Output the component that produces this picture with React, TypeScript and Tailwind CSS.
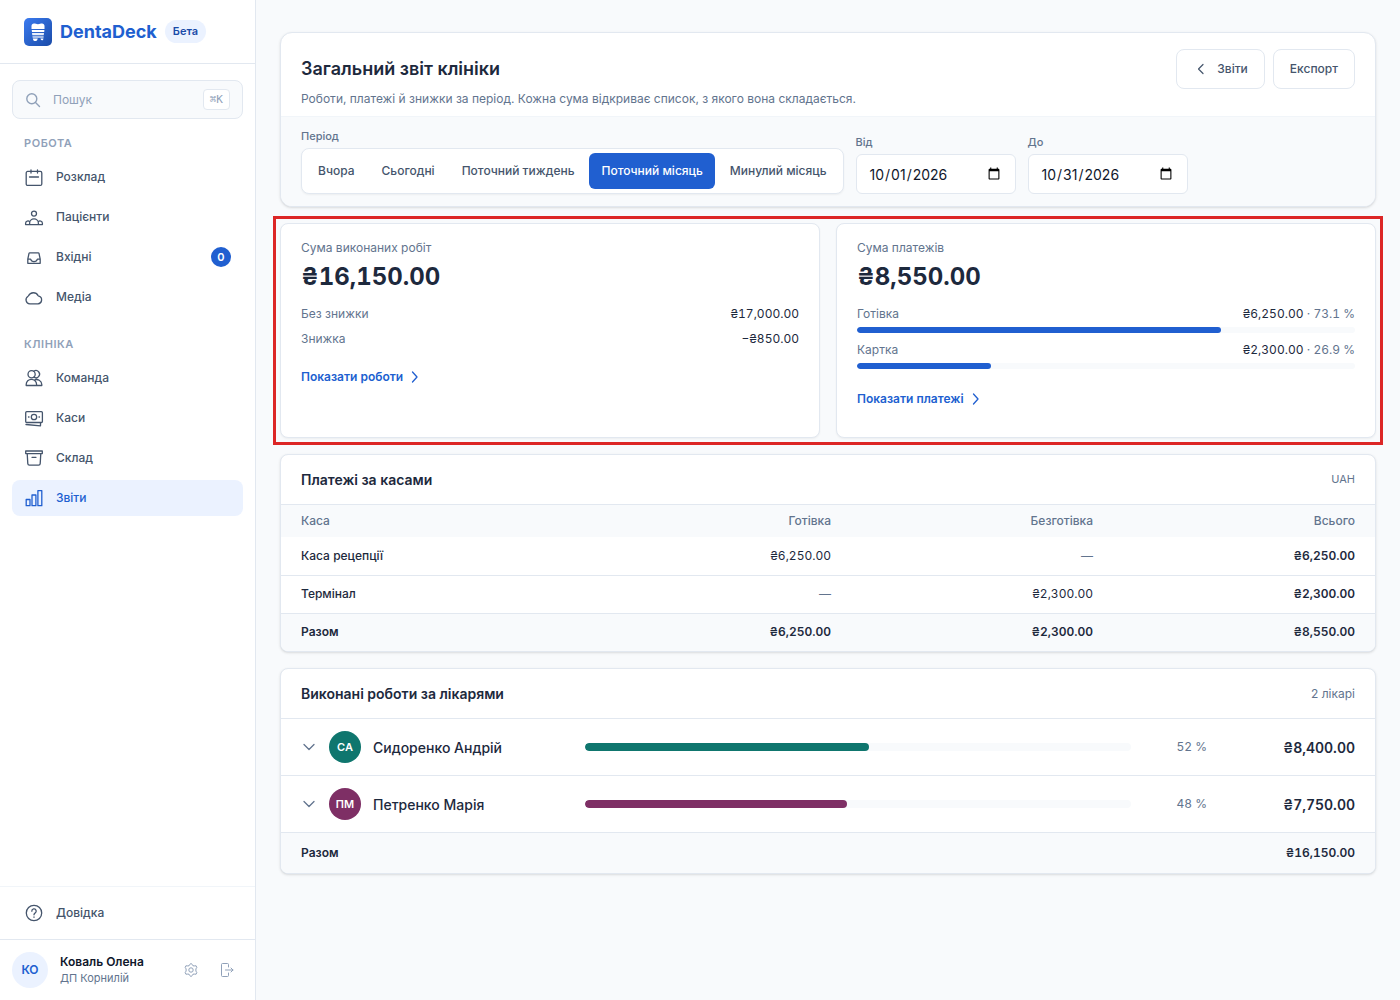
import { useState } from 'react';
import type { ReactNode } from 'react';

type IconName =
  | 'calendar'
  | 'patients'
  | 'inbox'
  | 'cloud'
  | 'team'
  | 'cash'
  | 'box'
  | 'bars'
  | 'help';

interface NavItem {
  label: string;
  icon: IconName;
  badge?: number;
}

const workItems: NavItem[] = [
  { label: 'Розклад', icon: 'calendar' },
  { label: 'Пацієнти', icon: 'patients' },
  { label: 'Вхідні', icon: 'inbox', badge: 0 },
  { label: 'Медіа', icon: 'cloud' },
];

const clinicItems: NavItem[] = [
  { label: 'Команда', icon: 'team' },
  { label: 'Каси', icon: 'cash' },
  { label: 'Склад', icon: 'box' },
  { label: 'Звіти', icon: 'bars' },
];

const periods = ['Вчора', 'Сьогодні', 'Поточний тиждень', 'Поточний місяць', 'Минулий місяць'];

const methods = [
  { name: 'Готівка', amount: '₴6,250.00', share: 73.1 },
  { name: 'Картка', amount: '₴2,300.00', share: 26.9 },
];

const registers = [
  { name: 'Каса рецепції', cash: '₴6,250.00', card: '—', total: '₴6,250.00' },
  { name: 'Термінал', cash: '—', card: '₴2,300.00', total: '₴2,300.00' },
];

const doctors = [
  { initials: 'СА', name: 'Сидоренко Андрій', share: 52, amount: '₴8,400.00', color: 'bg-[#0f766e]' },
  { initials: 'ПМ', name: 'Петренко Марія', share: 48, amount: '₴7,750.00', color: 'bg-[#7e2f65]' },
];

const iconShapes: Record<IconName, ReactNode> = {
  calendar: (
    <>
      <rect x="2.2" y="4.4" width="15.6" height="14" rx="1.5" />
      <path d="M7 3v3M13.5 3v3M5.5 10h9" />
    </>
  ),
  patients: (
    <>
      <circle cx="10" cy="6.6" r="2.5" />
      <path d="M1.600 17.600v-1.300a2.300 2.300 0 0 1 4.200-1.300M18.400 17.600v-1.300a2.300 2.300 0 0 0-4.200-1.300M5.600 17.600v-1.400a4.400 4.400 0 0 1 8.800 0v1.400M1.600 17.600h16.800" />
    </>
  ),
  inbox: (
    <path d="M5.800 5.800h8.400a.8.8 0 0 1 .8.600l1.200 5.800v4.100H3.800v-4.100L5 6.400a.8.8 0 0 1 .8-.6zM3.800 12.200h2.800c.4 1.500 1.600 2.500 3.400 2.500s3-1 3.400-2.500h2.800" />
  ),
  cloud: (
    <path d="M5.700 16.800h8.300a3.900 3.900 0 0 0 .9-7.600 1.500 1.500 0 0 1-.8-.6 5.400 5.400 0 0 0-9.600.2 1.500 1.500 0 0 1-.7.7 4 4 0 0 0 1.900 7.300z" />
  ),
  team: (
    <>
      <circle cx="7.600" cy="6.200" r="3.600" />
      <path d="M9.800 3.300a3.600 3.600 0 1 1 0 5.800M2.200 17.500v-1a5.200 5.200 0 0 1 10.400 0v1zM10.300 12a5.300 5.300 0 0 1 7.500 4.500v1h-5.200" />
    </>
  ),
  cash: (
    <>
      <rect x="1.700" y="3.700" width="16.700" height="10.800" rx="1" />
      <circle cx="10" cy="9" r="2.700" />
      <path d="M4.500 9h.5M15 9h.5M2 16.500l14.500 1.300v-3" />
    </>
  ),
  box: (
    <path d="M1.700 3h16.600v2.600H1.700zM3.200 5.600l.6 10a1.600 1.600 0 0 0 1.600 1.500h9.200a1.600 1.600 0 0 0 1.600-1.500l.6-10M8 9.300h4" />
  ),
  bars: (
    <path d="M2.200 11.500h3.800v6.200H2.200zM8 7h3.900v10.700H8zM13.900 2.600h3.900v15.100h-3.900z" />
  ),
  help: (
    <>
      <circle cx="10" cy="10" r="7.700" />
      <path d="M7.800 8.200a2.200 2.200 0 1 1 3.200 1.900c-.7.4-1 .8-1 1.700M10 14v.3" />
    </>
  ),
};

function Icon({ name }: { name: IconName }) {
  return (
    <svg
      viewBox="0 0 20 20"
      fill="none"
      stroke="currentColor"
      strokeWidth="1.3"
      strokeLinecap="round"
      strokeLinejoin="round"
      className="size-5 shrink-0"
      aria-hidden="true"
    >
      {iconShapes[name]}
    </svg>
  );
}

function Chevron({ d, className }: { d: string; className: string }) {
  return (
    <svg viewBox="0 0 16 16" fill="none" stroke="currentColor" strokeLinecap="round" strokeLinejoin="round" className={className} aria-hidden="true">
      <path d={d} />
    </svg>
  );
}

function Logo() {
  return (
    <svg viewBox="0 0 28 28" className="size-7" aria-hidden="true">
      <defs>
        <linearGradient id="logo-bg" x1="0" y1="0" x2="1" y2="1">
          <stop offset="0" stopColor="#3b7bf0" />
          <stop offset="1" stopColor="#1a4ba8" />
        </linearGradient>
      </defs>
      <rect width="28" height="28" rx="5" fill="url(#logo-bg)" />
      <path d="M7.500 11V8c0-1.600 1-2.500 2.500-2.500 1.400 0 2.300.7 4 .7s2.600-.7 4-.7c1.500 0 2.500.9 2.500 2.500v3z" fill="#fff" />
      <path d="M7.700 12h12.700l-.2 2H8z" fill="#fff" />
      <path d="M8 15h12l-.3 2.300H8.300z" fill="#fff" opacity=".9" />
      <path d="M8.400 18.300h11.300l-.2 1.500H8.700z" fill="#fff" opacity=".8" />
      <path d="M8.800 20.500h5l-.6 1.500c-.3.700-1 1-1.900 1-1.200 0-1.900-.5-2.200-1.500zM16.500 20.500h3l-.5 1.500c-.8.700-2 .3-2.200-.5z" fill="#fff" />
    </svg>
  );
}

function NavList({ items, active, onSelect }: { items: NavItem[]; active: string; onSelect: (label: string) => void }) {
  return (
    <ul className="space-y-1">
      {items.map((item) => (
        <li key={item.label}>
          <a
            href="#"
            onClick={() => onSelect(item.label)}
            className={`flex h-9 items-center gap-3 rounded-lg px-3 text-[12px] font-medium ${
              active === item.label ? 'bg-[#ebf2ff] text-[#205fd0]' : 'text-slate-600'
            }`}
          >
            <Icon name={item.icon} />
            <span className="flex-1">{item.label}</span>
            {item.badge !== undefined && (
              <span className="flex size-5 items-center justify-center rounded-full bg-[#205fd0] text-[11px] font-semibold text-white">
                {item.badge}
              </span>
            )}
          </a>
        </li>
      ))}
    </ul>
  );
}

function Sidebar() {
  const [active, setActive] = useState('Звіти');

  return (
    <aside className="sticky top-0 flex h-screen w-64 shrink-0 flex-col border-r border-slate-200 bg-white">
      <div className="flex h-16 shrink-0 items-center gap-2 border-b border-slate-200 px-6">
        <Logo />
        <span className="text-[18px] font-bold text-[#205fd0]">DentaDeck</span>
        <span className="rounded-full bg-[#ebf2ff] px-2 py-1 text-[11px] leading-[15px] font-semibold text-[#1a4ba8]">Бета</span>
      </div>

      <nav className="flex-1 overflow-y-auto px-3 pt-4">
        <div className="flex h-[39px] items-center gap-3 rounded-lg border border-slate-200 bg-slate-50 px-3 text-slate-400">
          <svg viewBox="0 0 16 16" fill="none" stroke="currentColor" strokeWidth="1.400" strokeLinecap="round" className="size-4 shrink-0" aria-hidden="true">
            <circle cx="6.800" cy="6.800" r="5" />
            <path d="M10.500 10.500l4 4" />
          </svg>
          <input
            type="search"
            aria-label="Пошук"
            placeholder="Пошук"
            className="min-w-0 flex-1 bg-transparent text-[12px] outline-none placeholder:text-slate-400"
          />
          <kbd className="rounded border border-slate-200 bg-white px-1.5 py-0.5 font-['DejaVu_Sans_Mono',monospace] text-[11px] leading-[15px]">⌘K</kbd>
        </div>

        <h2 className="mt-4 mb-2 px-3 text-[11px] leading-4 font-semibold tracking-wider text-slate-400">РОБОТА</h2>
        <NavList items={workItems} active={active} onSelect={setActive} />
        <h2 className="mt-[21px] mb-2 px-3 text-[11px] leading-4 font-semibold tracking-wider text-slate-400">КЛІНІКА</h2>
        <NavList items={clinicItems} active={active} onSelect={setActive} />
      </nav>

      <div className="border-t border-slate-100 px-3 py-2">
        <NavList items={[{ label: 'Довідка', icon: 'help' }]} active={active} onSelect={setActive} />
      </div>

      <div className="flex items-center gap-3 border-t border-slate-200 p-3">
        <span className="flex size-9 items-center justify-center rounded-full bg-[#ebf2ff] text-[12px] font-semibold text-[#205fd0]">КО</span>
        <div className="min-w-0 flex-1">
          <p className="text-[12px] leading-4 font-semibold text-slate-900">Коваль Олена</p>
          <p className="text-[11px] leading-4 text-slate-500">ДП Корнилій</p>
        </div>
        <div className="flex gap-1 text-slate-400">
          <button type="button" aria-label="Налаштування" className="flex size-8 items-center justify-center">
            <svg viewBox="0 0 16 16" fill="none" stroke="currentColor" strokeLinejoin="round" className="size-4" aria-hidden="true">
              <circle cx="8" cy="8" r="2.200" />
              <path d="M6.600 2.600 8 1.500l1.400 1.100.6 1.200 1.300.1 1.800-.1.700 1.700-.9 1.400v2.200l.9 1.400-.7 1.700-1.800-.1-1.300.1-.6 1.200L8 14.500l-1.400-1.100-.6-1.200-1.300-.1-1.800.1-.7-1.700.9-1.400V6.900l-.9-1.400.7-1.700 1.800.1L6 3.800z" />
            </svg>
          </button>
          <button type="button" aria-label="Вийти" className="flex size-8 items-center justify-center">
            <svg viewBox="0 0 16 16" fill="none" stroke="currentColor" strokeLinecap="round" strokeLinejoin="round" className="size-4" aria-hidden="true">
              <path d="M9.500 5V2.500a1 1 0 0 0-1-1h-5a1 1 0 0 0-1 1v11a1 1 0 0 0 1 1h5a1 1 0 0 0 1-1V11M6.500 8h7.500M12 6l2 2-2 2" />
            </svg>
          </button>
        </div>
      </div>
    </aside>
  );
}

function DateField({ id, label, value }: { id: string; label: string; value: string }) {
  return (
    <div>
      <label htmlFor={id} className="mb-1 block text-[11px] leading-[15px] font-medium text-slate-500">{label}</label>
      <input
        id={id}
        type="date"
        defaultValue={value}
        className="block h-10 w-40 rounded-md border border-slate-200 bg-white px-3 text-[14px] text-slate-900"
      />
    </div>
  );
}

function ReportHeader() {
  const [period, setPeriod] = useState('Поточний місяць');

  return (
    <section className="overflow-hidden rounded-xl border border-slate-200 bg-white shadow-sm">
      <div className="flex items-start justify-between px-5 pt-4 pb-2">
        <div>
          <h1 className="text-[18px] leading-10 font-semibold text-slate-800">Загальний звіт клініки</h1>
          <p className="text-[12px] leading-[19px] text-slate-500">
            Роботи, платежі й знижки за період. Кожна сума відкриває список, з якого вона складається.
          </p>
        </div>
        <div className="flex gap-2 text-[12px] font-medium text-slate-600">
          <a href="#" className="flex h-10 items-center gap-2 rounded-lg border border-slate-200 px-4">
            <Chevron d="M10 3.500 5.500 8l4.500 4.500" className="size-4 stroke-[1.2]" />
            Звіти
          </a>
          <button type="button" className="h-10 rounded-lg border border-slate-200 px-4">Експорт</button>
        </div>
      </div>

      <div className="flex flex-wrap items-end gap-3 border-t border-slate-100 bg-slate-50 px-5 py-3">
        <div>
          <p id="period-label" className="mb-1 text-[11px] leading-[15px] font-medium text-slate-500">Період</p>
          <div role="group" aria-labelledby="period-label" className="flex gap-[3px] rounded-lg border border-slate-200 bg-white p-1 shadow-xs">
            {periods.map((name) => (
              <button
                key={name}
                type="button"
                onClick={() => setPeriod(name)}
                className={`h-9 rounded-md px-3 text-[12px] font-medium ${
                  period === name ? 'bg-[#205fd0] text-white' : 'text-slate-600'
                }`}
              >
                {name}
              </button>
            ))}
          </div>
        </div>
        <DateField id="date-from" label="Від" value="2026-10-01" />
        <DateField id="date-to" label="До" value="2026-10-31" />
      </div>
    </section>
  );
}

function ShowLink({ children }: { children: ReactNode }) {
  return (
    <a href="#" className="inline-flex items-center gap-1 text-[12px] leading-4 font-semibold text-[#205fd0]">
      {children}
      <Chevron d="M5.500 3l4.500 5-4.500 5" className="size-4 stroke-[1.3]" />
    </a>
  );
}

function Summary() {
  return (
    <section className="grid grid-cols-2 gap-4 outline-3 outline-offset-4 outline-[#dc2626]">
      <article className="rounded-lg border border-slate-200 bg-white px-5 py-4 shadow-xs">
        <h2 className="text-[12px] leading-4 text-slate-500">Сума виконаних робіт</h2>
        <p className="mt-[5px] text-[24px] leading-8 font-bold text-slate-800 tabular-nums">₴16,150.00</p>
        <dl className="mt-3 mb-4 space-y-2 text-[12px] leading-[17px]">
          <div className="flex justify-between">
            <dt className="text-slate-500">Без знижки</dt>
            <dd className="text-slate-800 tabular-nums">₴17,000.00</dd>
          </div>
          <div className="flex justify-between">
            <dt className="text-slate-500">Знижка</dt>
            <dd className="text-slate-800 tabular-nums">−₴850.00</dd>
          </div>
        </dl>
        <ShowLink>Показати роботи</ShowLink>
      </article>

      <article className="rounded-lg border border-slate-200 bg-white px-5 pt-4 pb-7 shadow-xs">
        <h2 className="text-[12px] leading-4 text-slate-500">Сума платежів</h2>
        <p className="mt-[5px] text-[24px] leading-8 font-bold text-slate-800 tabular-nums">₴8,550.00</p>
        <ul className="mt-3 mb-4 space-y-2 text-[12px] leading-[18px]">
          {methods.map((method) => (
            <li key={method.name}>
              <div className="flex justify-between">
                <span className="text-slate-500">{method.name}</span>
                <span className="text-slate-800 tabular-nums">
                  {method.amount} <span className="text-slate-500">· {method.share} %</span>
                </span>
              </div>
              <div className="mt-1 h-1.5 overflow-hidden rounded-full bg-slate-50">
                <div className="h-full rounded-full bg-[#205fd0]" style={{ width: `${method.share}%` }} />
              </div>
            </li>
          ))}
        </ul>
        <ShowLink>Показати платежі</ShowLink>
      </article>
    </section>
  );
}

function Registers() {
  return (
    <section className="overflow-hidden rounded-lg border border-slate-200 bg-white shadow-sm">
      <div className="flex h-[50px] items-center justify-between border-b border-slate-200 px-5">
        <h2 className="text-[14px] font-semibold text-slate-800">Платежі за касами</h2>
        <span className="text-[11px] text-slate-500">UAH</span>
      </div>
      <table className="w-full table-fixed text-right text-[12px] text-slate-800 tabular-nums">
        <thead>
          <tr className="h-8 bg-slate-50 text-slate-500">
            <th className="px-5 text-left font-medium">Каса</th>
            <th className="w-[262px] px-5 font-medium">Готівка</th>
            <th className="w-[262px] px-5 font-medium">Безготівка</th>
            <th className="w-[262px] px-5 font-medium">Всього</th>
          </tr>
        </thead>
        <tbody>
          {registers.map((row) => (
            <tr key={row.name} className="h-[38px] border-b border-slate-200">
              <td className="px-5 text-left font-medium">{row.name}</td>
              <td className={row.cash === '—' ? 'px-5 text-slate-500' : 'px-5'}>{row.cash}</td>
              <td className={row.card === '—' ? 'px-5 text-slate-500' : 'px-5'}>{row.card}</td>
              <td className="px-5 font-semibold">{row.total}</td>
            </tr>
          ))}
        </tbody>
        <tfoot>
          <tr className="h-[38px] bg-slate-50 font-semibold">
            <td className="px-5 text-left">Разом</td>
            <td className="px-5">₴6,250.00</td>
            <td className="px-5">₴2,300.00</td>
            <td className="px-5">₴8,550.00</td>
          </tr>
        </tfoot>
      </table>
    </section>
  );
}

function Doctors() {
  return (
    <section className="overflow-hidden rounded-lg border border-slate-200 bg-white shadow-sm">
      <div className="flex h-[50px] items-center justify-between border-b border-slate-200 px-5">
        <h2 className="text-[14px] font-semibold text-slate-800">Виконані роботи за лікарями</h2>
        <span className="text-[12px] text-slate-500">2 лікарі</span>
      </div>
      {doctors.map((doctor) => (
        <button
          key={doctor.name}
          type="button"
          className="grid h-[57px] w-full grid-cols-[16px_32px_200px_1fr_64px_136px] items-center gap-3 border-b border-slate-200 px-5 text-left"
        >
          <Chevron d="M3 5.500l5 5 5-5" className="size-4 stroke-[1.3] text-slate-500" />
          <span className={`flex size-8 items-center justify-center rounded-full text-[11px] font-semibold text-white ${doctor.color}`}>
            {doctor.initials}
          </span>
          <span className="text-[14px] font-medium text-slate-800">{doctor.name}</span>
          <span className="h-2 overflow-hidden rounded-full bg-slate-50">
            <span className={`block h-full rounded-full ${doctor.color}`} style={{ width: `${doctor.share}%` }} />
          </span>
          <span className="text-right text-[12px] text-slate-500 tabular-nums">{doctor.share} %</span>
          <span className="text-right text-[14px] font-semibold text-slate-800 tabular-nums">{doctor.amount}</span>
        </button>
      ))}
      <div className="flex h-10 items-center justify-between bg-slate-50 px-5 text-[12px] font-semibold text-slate-800">
        <span>Разом</span>
        <span className="tabular-nums">₴16,150.00</span>
      </div>
    </section>
  );
}

export default function App() {
  return (
    <div className="flex min-h-screen bg-slate-50 font-[Inter,'Liberation_Sans',sans-serif]">
      <Sidebar />
      <main className="min-w-0 flex-1 space-y-4 px-6 py-8">
        <ReportHeader />
        <Summary />
        <Registers />
        <Doctors />
      </main>
    </div>
  );
}
